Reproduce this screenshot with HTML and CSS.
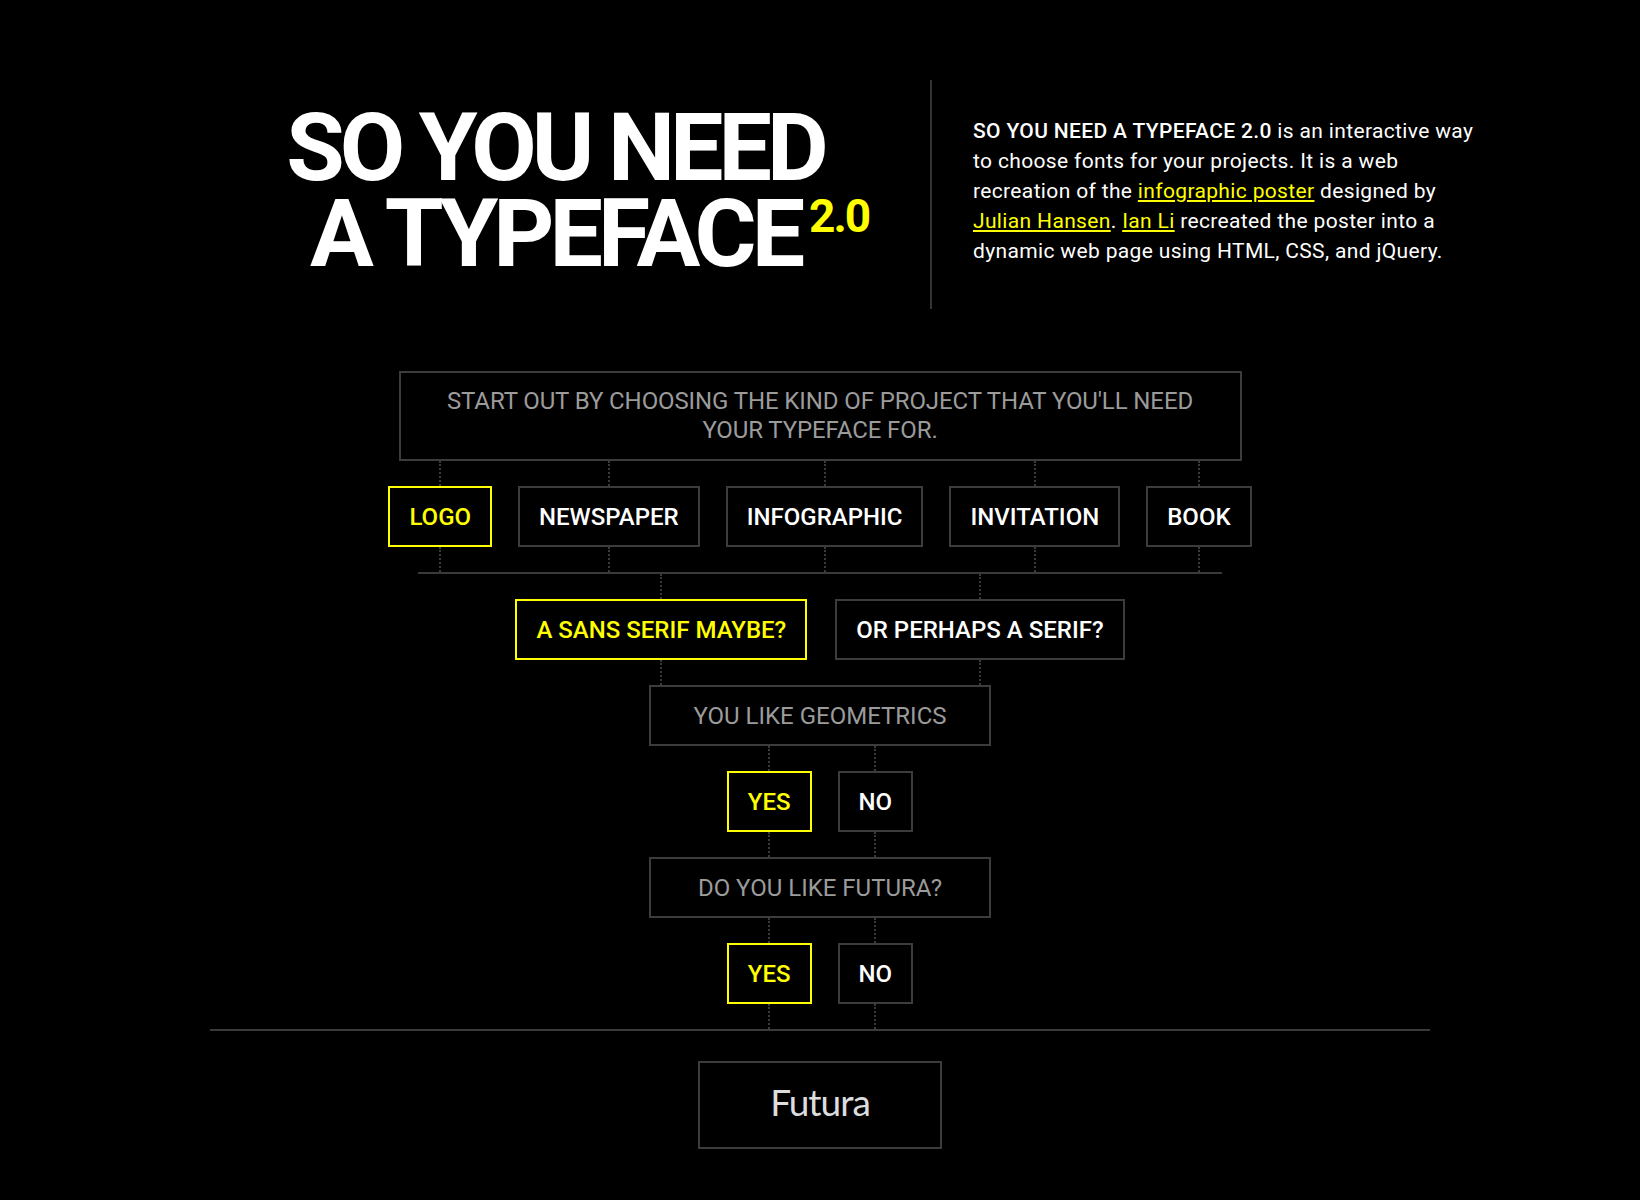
FILE: index.html
```html
<!DOCTYPE html>
<html lang="en">
<head>
<meta charset="utf-8">
<title>So You Need a Typeface 2.0</title>
<link rel="stylesheet" href="styles.css">
</head>
<body>
<header class="hero">
  <div class="title-wrap">
    <h1 class="title"><span class="title-line">SO YOU NEED</span><span class="title-line title-last">A TYPEFACE<span class="ver">2.0</span></span></h1>
  </div>
  <div class="intro">
    <p><strong>SO YOU NEED A TYPEFACE 2.0</strong> is an interactive way to choose fonts for your projects. It is a web recreation of the <a href="#">infographic poster</a> designed by <a href="#">Julian Hansen</a>. <a href="#">Ian Li</a> recreated the poster into a dynamic web page using HTML, CSS, and jQuery.</p>
  </div>
</header>

<main class="chart">
  <div class="q q-start">START OUT BY CHOOSING THE KIND OF PROJECT THAT YOU'LL NEED YOUR TYPEFACE FOR.</div>

  <div class="row">
    <div class="opt on">LOGO</div>
    <div class="opt">NEWSPAPER</div>
    <div class="opt">INFOGRAPHIC</div>
    <div class="opt">INVITATION</div>
    <div class="opt">BOOK</div>
  </div>

  <hr class="rule rule-short">

  <div class="row row-wide">
    <div class="opt on">A SANS SERIF MAYBE?</div>
    <div class="opt">OR PERHAPS A SERIF?</div>
  </div>

  <div class="q q-sub">YOU LIKE GEOMETRICS</div>

  <div class="row">
    <div class="opt on">YES</div>
    <div class="opt">NO</div>
  </div>

  <div class="q q-sub">DO YOU LIKE FUTURA?</div>

  <div class="row">
    <div class="opt on">YES</div>
    <div class="opt">NO</div>
  </div>

  <hr class="rule rule-long">

  <div class="result">Futura</div>
</main>
</body>
</html>
```

FILE: styles.css
```css
* {
  box-sizing: border-box;
}

body {
  margin: 0;
  background: #000;
  color: #fff;
  font-family: Roboto, "Liberation Sans", sans-serif;
}

/* ---------- header ---------- */
.hero {
  display: flex;
  align-items: center;
  width: 1220px;
  height: 229px;
  margin: 80px auto 0;
}

.title-wrap {
  flex: none;
  width: 690px;
  margin-right: 30px;
  text-align: center;
  padding-bottom: 8px;
}

.title {
  margin: 0;
  font-size: 95px;
  font-weight: 700;
  line-height: 86px;
  letter-spacing: -5px;
}

.title-line {
  display: block;
}

.title-last {
  display: inline-block;
  position: relative;
}

.ver {
  position: absolute;
  left: 100%;
  top: 0;
  margin-left: 9px;
  color: #ff0;
  font-size: 46px;
  font-weight: 700;
  line-height: 50px;
  letter-spacing: -2px;
}

.intro {
  flex: none;
  align-self: stretch;
  display: flex;
  align-items: center;
  border-left: 2px solid #333;
  padding-left: 41px;
  padding-bottom: 8px;
}

.intro p {
  margin: 0;
  width: 510px;
  font-size: 21px;
  line-height: 30px;
  letter-spacing: 0.35px;
}

.intro strong {
  font-weight: 500;
}

.intro a {
  color: #ff0;
  text-decoration: underline;
}

/* ---------- flow chart ---------- */
.chart {
  display: flex;
  flex-direction: column;
  align-items: center;
  gap: 25px;
  margin-top: 62px;
  padding-bottom: 50px;
}

.q {
  border: 2px solid #3c3c3c;
  color: #9b9b9b;
  text-align: center;
}

.q-start {
  width: 843px;
  height: 90px;
  padding: 14px 40px;
  font-size: 24px;
  line-height: 29px;
  letter-spacing: -0.1px;
}

.q-sub {
  width: 342px;
  height: 61px;
  display: flex;
  align-items: center;
  justify-content: center;
  font-size: 24px;
}

.row {
  display: flex;
  gap: 26px;
}

.row-wide {
  gap: 28px;
}

.opt {
  position: relative;
  display: flex;
  align-items: center;
  height: 61px;
  padding: 0 19px;
  border: 2px solid #3c3c3c;
  font-size: 24px;
  font-weight: 500;
  color: #fff;
}

.opt.on {
  border-color: #ff0;
  color: #ff0;
}

.opt::before,
.opt::after {
  content: "";
  position: absolute;
  left: 50%;
  margin-left: -1px;
  height: 25px;
  border-left: 2px dotted #3a3a3a;
}

.opt::before {
  bottom: calc(100% + 2px);
}

.opt::after {
  top: calc(100% + 2px);
}

.rule {
  margin: 0;
  border: 0;
  height: 2px;
  background: #3a3a3a;
}

.rule-short {
  width: 804px;
}

.rule-long {
  width: 1220px;
}

.result {
  margin-top: 5px;
  width: 244px;
  height: 88px;
  padding-bottom: 8px;
  display: flex;
  align-items: center;
  justify-content: center;
  border: 2px solid #3c3c3c;
  font-family: Lato, "Noto Sans", sans-serif;
  font-size: 37px;
  letter-spacing: -1px;
  color: #ddd;
}
```
